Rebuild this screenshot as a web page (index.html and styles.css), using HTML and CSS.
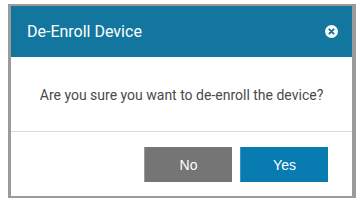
FILE: index.html
```html
<!DOCTYPE html>
<html lang="en">
<head>
  <meta charset="UTF-8" />
  <meta name="viewport" content="width=device-width, initial-scale=1.0" />
  <title>De-Enroll Device</title>
  <link rel="stylesheet" href="styles.css">
</head>
<body>
  <!-- Modal frame -->
  <div class="frame">
    <div class="modal">
      <div class="modal-header">
        <span class="modal-title">De-Enroll Device</span>
        <span class="close-btn">
          <svg width="13" height="13" viewBox="0 0 13 13">
            <circle cx="6.5" cy="6.5" r="6.5" fill="#ffffff" />
            <path d="M4.4 4.4 L8.6 8.6 M8.6 4.4 L4.4 8.6" stroke="#12769e" stroke-width="2" stroke-linecap="round" />
          </svg>
        </span>
      </div>

      <div class="modal-body">
        Are you sure you want to de-enroll the device?
      </div>

      <div class="modal-footer">
        <button class="btn btn-no">No</button>
        <button class="btn btn-yes">Yes</button>
      </div>
    </div>
  </div>
</body>
</html>
```

FILE: styles.css
```css
* { box-sizing: border-box; }

body {
  margin: 0;
  background-color: #ffffff;
  font-family: Roboto, "Liberation Sans", Arial, sans-serif;
}

.frame {
  margin: 4px 4px 0 8px;
  padding: 2px 4px 2px 3px;
  background-color: #9b9b9b;
}

.modal {
  background-color: #ffffff;
}

.modal-header {
  height: 51px;
  background-color: #12769e;
  display: flex;
  align-items: center;
  justify-content: space-between;
  padding: 0 14px 0 16px;
}

.modal-title {
  color: #ffffff;
  font-size: 16px;
  font-weight: 400;
}

.close-btn {
  display: flex;
  cursor: pointer;
}

.modal-body {
  height: 75px;
  display: flex;
  align-items: center;
  justify-content: center;
  font-size: 14px;
  color: #4a4a4a;
  border-bottom: 1px solid #dddddd;
  padding-top: 2px;
}

.modal-footer {
  display: flex;
  justify-content: flex-end;
  gap: 8px;
  padding: 15px 24px 14px 0;
}

.btn {
  width: 88px;
  height: 35px;
  border: none;
  color: #ffffff;
  font-family: "Liberation Sans", Arial, sans-serif;
  font-size: 14px;
  cursor: pointer;
}

.btn-no {
  background-color: #757575;
  border-left: 1px solid #9a9a9a;
}

.btn-yes {
  background-color: #087bb0;
  border-left: 1px solid #3a95c2;
}
```
